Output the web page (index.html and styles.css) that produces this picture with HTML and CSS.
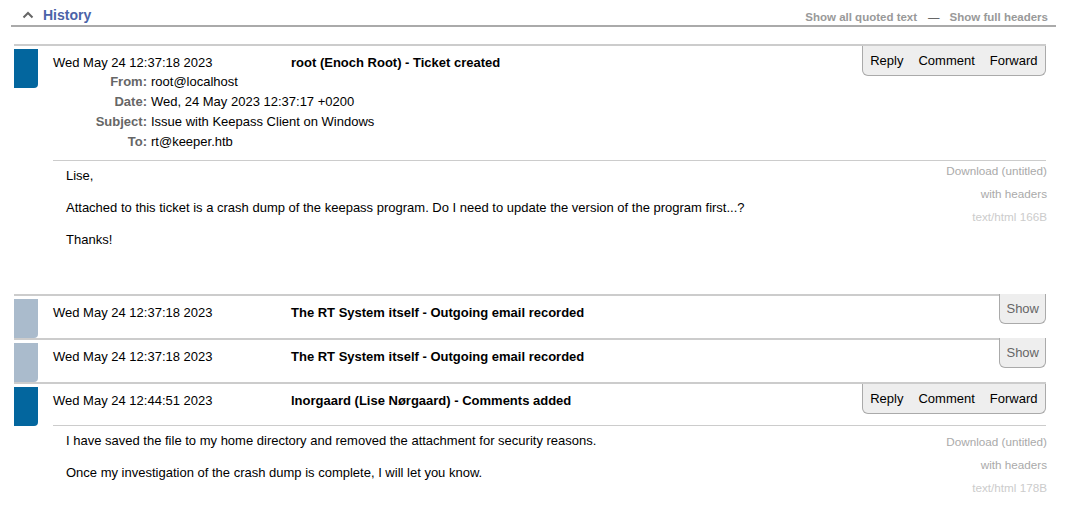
FILE: index.html
```html
<!DOCTYPE html>
<html lang="en">
<head>
<meta charset="utf-8">
<title>History</title>
<link rel="stylesheet" href="styles.css">
</head>
<body>
<div class="history">
  <div class="history-head">
    <div class="history-title">
      <svg class="chev" width="12" height="8" viewBox="0 0 12 8"><polyline points="1.5,6.5 6,2 10.5,6.5" fill="none" stroke="#666" stroke-width="2"/></svg>
      <span>History</span>
    </div>
    <div class="history-links">
      <a>Show all quoted text</a><span class="sep">—</span><a>Show full headers</a>
    </div>
  </div>

  <div class="txns">
    <div class="txn">
      <div class="txn-mark"></div>
      <div class="txn-main">
        <div class="txn-top">
          <div class="txn-info">
            <div class="txn-line"><span class="txn-date">Wed May 24 12:37:18 2023</span><span class="txn-desc">root (Enoch Root) - Ticket created</span></div>
            <div class="headers">
              <span class="hkey">From:</span><span class="hval">root@localhost</span>
              <span class="hkey">Date:</span><span class="hval">Wed, 24 May 2023 12:37:17 +0200</span>
              <span class="hkey">Subject:</span><span class="hval">Issue with Keepass Client on Windows</span>
              <span class="hkey">To:</span><span class="hval">rt@keeper.htb</span>
            </div>
          </div>
          <div class="actions"><a>Reply</a><a>Comment</a><a>Forward</a></div>
        </div>
        <div class="txn-body">
          <div class="msg">
            <p>Lise,</p>
            <p>Attached to this ticket is a crash dump of the keepass program. Do I need to update the version of the program first...?</p>
            <p>Thanks!</p>
          </div>
          <div class="attach">
            <div>Download (untitled)</div>
            <div>with headers</div>
            <div class="attach-type">text/html 166B</div>
          </div>
        </div>
      </div>
    </div>

    <div class="txn">
      <div class="txn-mark txn-mark--sys"></div>
      <div class="txn-main">
        <div class="txn-top">
          <div class="txn-info">
            <div class="txn-line"><span class="txn-date">Wed May 24 12:37:18 2023</span><span class="txn-desc">The RT System itself - Outgoing email recorded</span></div>
          </div>
          <div class="show">Show</div>
        </div>
      </div>
    </div>

    <div class="txn">
      <div class="txn-mark txn-mark--sys"></div>
      <div class="txn-main">
        <div class="txn-top">
          <div class="txn-info">
            <div class="txn-line"><span class="txn-date">Wed May 24 12:37:18 2023</span><span class="txn-desc">The RT System itself - Outgoing email recorded</span></div>
          </div>
          <div class="show">Show</div>
        </div>
      </div>
    </div>

    <div class="txn">
      <div class="txn-mark"></div>
      <div class="txn-main">
        <div class="txn-top txn-top--compact">
          <div class="txn-info">
            <div class="txn-line"><span class="txn-date">Wed May 24 12:44:51 2023</span><span class="txn-desc">lnorgaard (Lise Nørgaard) - Comments added</span></div>
          </div>
          <div class="actions"><a>Reply</a><a>Comment</a><a>Forward</a></div>
        </div>
        <div class="txn-body">
          <div class="msg">
            <p>I have saved the file to my home directory and removed the attachment for security reasons.</p>
            <p>Once my investigation of the crash dump is complete, I will let you know.</p>
          </div>
          <div class="attach attach--low">
            <div>Download (untitled)</div>
            <div>with headers</div>
            <div class="attach-type">text/html 178B</div>
          </div>
        </div>
      </div>
    </div>
  </div>
</div>
</body>
</html>
```

FILE: styles.css
```css
html, body {
  margin: 0;
  padding: 0;
  background: #fff;
}
body {
  font-family: "Liberation Sans", Arial, sans-serif;
  font-size: 13px;
  color: #000;
}
.history {
  margin: 0 13px 0 11px;
}
.history-head {
  display: flex;
  justify-content: space-between;
  align-items: flex-end;
  border-bottom: 2px solid #aaa;
  padding: 6px 8px 1px 0;
}
.history-title {
  display: flex;
  align-items: center;
  gap: 9px;
  padding-left: 11px;
  font-size: 14px;
  font-weight: bold;
  line-height: 18px;
  color: #4b63a8;
}
.chev {
  display: block;
  margin-top: -1px;
}
.history-links {
  font-size: 11.5px;
  font-weight: bold;
  line-height: 14px;
  color: #999;
}
.history-links .sep {
  margin: 0 10px 0 11px;
  color: #444;
  font-weight: normal;
}
.txns {
  margin: 17px 10px 0 3px;
}
.txn {
  border-top: 2px solid #ccc;
  display: grid;
  grid-template-columns: 24px 1fr;
  column-gap: 15px;
}
.txn-mark {
  margin-top: 3px;
  height: 39px;
  background: #03669e;
  border-bottom-right-radius: 4px;
}
.txn-mark--sys {
  background: #aabbcc;
}
.txn-top {
  display: flex;
  justify-content: space-between;
  align-items: flex-start;
  margin-bottom: 8px;
}
.txn-top--compact {
  margin-bottom: 11px;
}
.txn-info {
  padding-top: 7px;
}
.txn-line {
  display: flex;
  line-height: 19px;
}
.txn-date {
  width: 238px;
}
.txn-desc {
  font-weight: bold;
}
.headers {
  display: grid;
  grid-template-columns: 94px auto;
  column-gap: 4px;
  line-height: 20px;
}
.hkey {
  text-align: right;
  font-weight: bold;
  color: #666;
}
.actions {
  display: flex;
  background: #eee;
  border: 1px solid #aaa;
  border-top: none;
  border-radius: 0 0 6px 6px;
  line-height: 29px;
}
.actions a {
  padding: 0 7.5px;
  color: #000;
}
.show {
  background: #eee;
  border: 1px solid #aaa;
  border-top: none;
  border-radius: 0 0 6px 6px;
  line-height: 29px;
  padding: 0 6px;
  color: #666;
  margin-top: -2px;
}
.txn-body {
  border-top: 1px solid #ccc;
  display: flex;
  justify-content: space-between;
  align-items: flex-start;
}
.msg {
  padding: 6px 0 31px 13px;
  line-height: 18px;
}
.msg p {
  margin: 0 0 14px;
}
.attach {
  margin-top: -2px;
  margin-right: -1px;
  text-align: right;
  font-size: 11.7px;
  line-height: 23px;
  color: #aaa;
}
.attach--low {
  padding-top: 6px;
}
.attach-type {
  color: #ccc;
}
```
